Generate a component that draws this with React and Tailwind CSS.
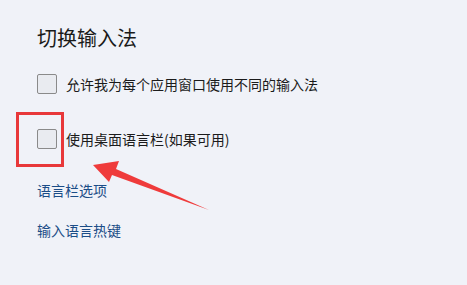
export default function App() {
  const font = { fontFamily: '"Noto Sans CJK SC", "Noto Sans", sans-serif' };
  return (
    <div className="relative w-[467px] h-[285px] overflow-hidden bg-[#f0f2f8]" style={font}>
      <div className="flex flex-col pl-[37px] pt-[24px]">
        <div className="text-[20px] leading-[28px] text-[#1a1a1a]">切换输入法</div>
        <div className="mt-[22px] flex items-center gap-[9px] h-[20px]">
          <div className="w-[20px] h-[20px] rounded-[2px] border border-[#8a8a8a] bg-[#e9ebf0]" />
          <span className="text-[14px] leading-[20px] text-[#1b1b1b]">允许我为每个应用窗口使用不同的输入法</span>
        </div>
        <div className="mt-[35px] flex items-center gap-[9px] h-[20px]">
          <div className="w-[20px] h-[20px] rounded-[2px] border border-[#8a8a8a] bg-[#e9ebf0]" />
          <span className="text-[14px] leading-[20px] text-[#1b1b1b]">使用桌面语言栏(如果可用)</span>
        </div>
        <div className="mt-[31px] text-[14px] leading-[20px] text-[#1b4d87]">语言栏选项</div>
        <div className="mt-[20px] text-[14px] leading-[20px] text-[#1b4d87]">输入语言热键</div>
      </div>
      <div className="absolute left-[16px] top-[112px] w-[48px] h-[55px] border-[3px] border-[#e8383a]" />
      <svg className="absolute left-0 top-0" width="467" height="285" viewBox="0 0 467 285">
        <polygon points="93,165 119,161 116,169 209,210 112,175 109,182" fill="#ef3b3b" />
      </svg>
    </div>
  );
}
